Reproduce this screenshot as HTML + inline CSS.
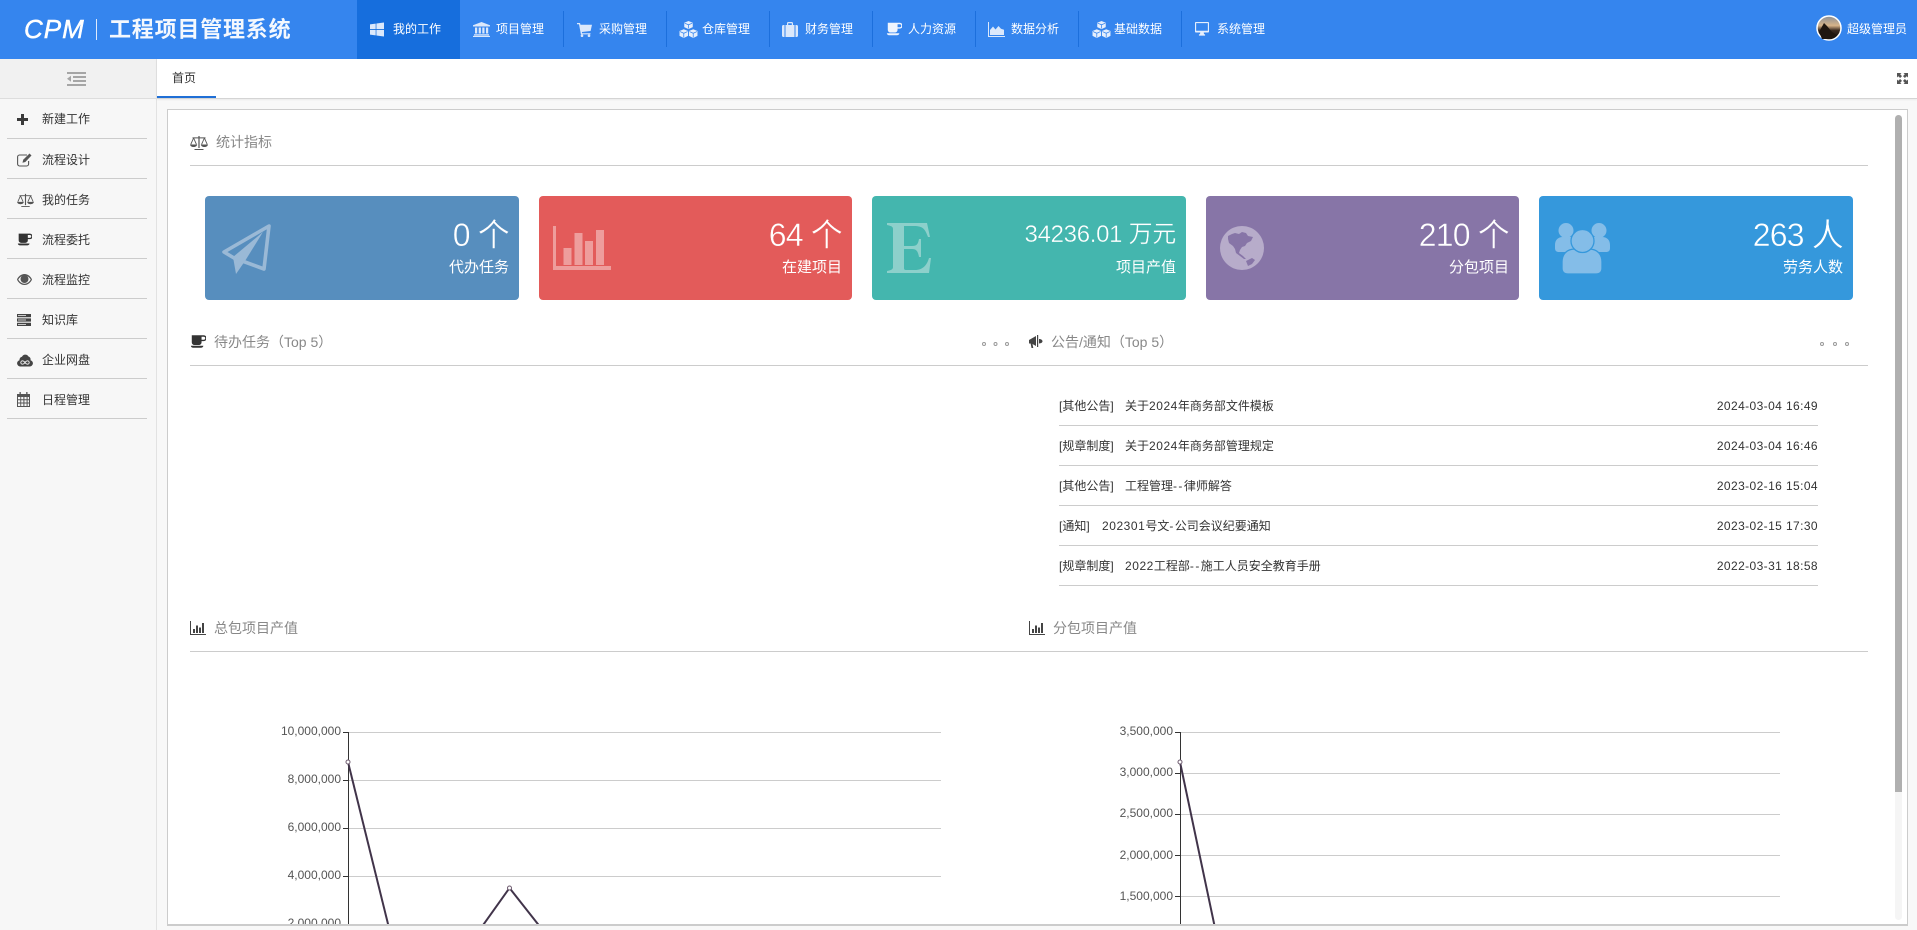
<!DOCTYPE html>
<html lang="zh-CN"><head><meta charset="utf-8"><title>CPM 工程项目管理系统</title>
<style>
html,body{margin:0;padding:0;width:1917px;height:930px;overflow:hidden;background:#f8f8f8;font-family:"Liberation Sans","Noto Sans CJK SC",sans-serif;font-size:12px;color:#333}
.a{position:absolute;white-space:nowrap}
svg.a{display:block;overflow:hidden}
#head{position:absolute;left:0;top:0;width:1917px;height:59px;background:#3585ee}
.nt{color:#fff;top:20px;line-height:19px;font-size:12px}
.sep{position:absolute;top:11px;width:1px;height:36px;background:#1c6fdc}
.ic{fill:#fff}
.st{color:#333;left:42px;line-height:18px}
.sl{position:absolute;left:7px;width:140px;height:1px;background:#ccc}
.ln{position:absolute;height:1px;background:#ccc}
.tt{color:#888;font-size:14px;line-height:20px}
.card{position:absolute;top:196px;height:104px;width:314px;border-radius:4px;color:#fff}
.num{position:absolute;right:10px;top:19px;line-height:40px;font-size:32px;white-space:nowrap;letter-spacing:-.8px;-webkit-text-stroke:.45px var(--c)}
.lab{position:absolute;right:10px;top:61px;line-height:22px;font-size:15px;white-space:nowrap}
.nc{left:1059px;line-height:18px}
.nd{left:1125px;line-height:18px}
.nr{right:99px;line-height:18px;letter-spacing:.4px}
.d{font-style:normal;letter-spacing:.55px}
.h{font-style:normal;letter-spacing:1.4px}
text{font-family:"Liberation Sans",sans-serif;font-size:12px;fill:#555}
</style></head><body>
<svg width="0" height="0" style="position:absolute">
<defs>
<symbol id="coffee" viewBox="0 0 18 14"><path fill-rule="evenodd" d="M2 0H15.500A3 3 0 0 1 15.500 6.600H13V8A3 3 0 0 1 10 11H5A3 3 0 0 1 2 8ZM13 1.600V5h2.400a1.700 1.700 0 0 0 0-3.400Z"/><path d="M1 11.800H15C15 13 14 14 12.600 14H3.200C2 14 1 13 1 11.800Z"/></symbol>
<symbol id="scale" viewBox="0 0 18 15"><path d="M8.400 1h1.200v12H8.400zM2.500 2.400h13v1h-13zM4.500 14h9v1h-9z"/><path fill="none" stroke-width=".9" stroke="currentColor" d="M3.600 3 .8 9.300M3.600 3l2.800 6.300M14.400 3l-2.800 6.300M14.400 3l2.800 6.300"/><path d="M0 9.500h7.200C7 11 5.500 12 3.600 12S.2 11 0 9.500zM10.800 9.500H18c-.2 1.500-1.700 2.500-3.600 2.500s-3.400-1-3.600-2.500z"/></symbol>
<symbol id="bars" viewBox="0 0 16 14"><path d="M0 0h1v13h15v1H0zM3 8h2v4H3zM6 4.500h2V12H6zM9 6.500h2V12H9zM12 2h2v10h-2z"/></symbol>
<symbol id="cubes" viewBox="0 0 20 18"><path d="M10 0l4.500 1.800v4.700L10 8.600 5.500 6.500V1.800zM5 8.700l4.500 1.900v5.200L5 18 .5 15.800v-5.200zM15 8.700l4.500 1.900v5.200L15 18l-4.500-2.200v-5.200z"/><path fill="none" stroke="#3585ee" stroke-width=".8" d="M6 2.300 10 4l4-1.700M10 4v4M1 11.200 5 13l4-1.800M5 13v4.500M11 11.200 15 13l4-1.800M15 13v4.500"/></symbol>
</defs></svg>

<div id="head"></div>
<div class="a" style="left:24px;top:13px;color:#fff;font:italic normal 26px/32px 'Liberation Sans',sans-serif;letter-spacing:1px;-webkit-text-stroke:.5px #fff">CPM</div>
<div style="position:absolute;left:96px;top:19px;width:1px;height:21px;background:#dfeafc"></div>
<div class="a" style="left:109px;top:15px;color:#f4f8fe;font-size:22px;line-height:29px;font-weight:bold;letter-spacing:.8px">工程项目管理系统</div>

<div style="position:absolute;left:357px;top:0;width:103px;height:59px;background:#166edd"></div>
<div class="sep" style="left:563px"></div><div class="sep" style="left:666px"></div><div class="sep" style="left:769px"></div><div class="sep" style="left:872px"></div><div class="sep" style="left:975px"></div><div class="sep" style="left:1078px"></div><div class="sep" style="left:1181px"></div>

<svg class="a ic" style="left:370px;top:22px" width="14" height="15" viewBox="0 0 16 16"><path fill="#dbe8fb" d="M0 2.200 6.500 1.300V7.500H0zM7.300 1.200 16 0V7.500H7.300zM0 8.500H6.500V14.700L0 13.800zM7.300 8.500H16V16L7.300 14.800z"/></svg>
<svg class="a ic" style="left:473px;top:22px" width="17" height="15" viewBox="0 0 17 15"><path fill="#dbe8fb" d="M8.500 0 17 3.300V4.500H0V3.300zM2 5.500h2.200v6H2zM5.700 5.500h2.200v6H5.700zM9.300 5.500h2.200v6H9.300zM13 5.500h2.200v6H13zM1 12.300h15v1.200H1zM0 13.900h17V15H0z"/></svg>
<svg class="a ic" style="left:577px;top:23px" width="15" height="14" viewBox="0 0 15 14"><path fill="#dbe8fb" d="M0 0h3l.5 1.700H15L13.600 8 4.900 9l.2 1.200H13.500v1.200H3.900L2 1.300H0z"/><circle fill="#dbe8fb" cx="5" cy="12.700" r="1.300"/><circle fill="#dbe8fb" cx="12" cy="12.700" r="1.300"/></svg>
<svg class="a" style="left:679px;top:21px;fill:#e6effc" width="19" height="17"><use href="#cubes"/></svg>
<svg class="a ic" style="left:782px;top:22px" width="16" height="15" viewBox="0 0 16 15"><path fill="#dbe8fb" fill-rule="evenodd" d="M5 3V1.200C5 .5 5.500 0 6.200 0h3.600C10.500 0 11 .5 11 1.200V3h1.500v12h-9V3zM6.200 1.200V3h3.600V1.200zM0 4.500C0 3.600.6 3 1.500 3h1v12h-1C.6 15 0 14.400 0 13.500zM13.500 3h1c.9 0 1.500.6 1.500 1.500v9c0 .9-.6 1.500-1.500 1.500h-1z"/></svg>
<svg class="a" style="left:886px;top:22px;fill:#eef4fd" width="16" height="14"><use href="#coffee"/></svg>
<svg class="a" style="left:988px;top:22px" width="17" height="15" viewBox="0 0 17 15"><path fill="#dbe8fb" d="M0 0h1v14h16v1H0zM2 13V8l3-3.500 2.500 3L10.500 4 13 6.800l3 1V13z"/></svg>
<svg class="a" style="left:1092px;top:21px;fill:#e6effc" width="19" height="17"><use href="#cubes"/></svg>
<svg class="a" style="left:1195px;top:22px" width="14" height="14" viewBox="0 0 16 16"><path fill="#e6effc" fill-rule="evenodd" d="M1 0h14c.6 0 1 .4 1 1v10c0 .6-.4 1-1 1H10l.3 2h1.200v1.500h-7V14h1.200l.3-2H1c-.6 0-1-.4-1-1V1c0-.6.4-1 1-1zM1.300 1.300v8.700h13.400V1.300z"/></svg>

<div class="a nt" style="left:393px">我的工作</div>
<div class="a nt" style="left:496px">项目管理</div>
<div class="a nt" style="left:599px">采购管理</div>
<div class="a nt" style="left:702px">仓库管理</div>
<div class="a nt" style="left:805px">财务管理</div>
<div class="a nt" style="left:908px">人力资源</div>
<div class="a nt" style="left:1011px">数据分析</div>
<div class="a nt" style="left:1114px">基础数据</div>
<div class="a nt" style="left:1217px">系统管理</div>

<svg class="a" style="left:1816px;top:15px" width="26" height="26" viewBox="0 0 26 26"><defs><linearGradient id="sky" x1="0" y1="0" x2="0" y2="1"><stop offset="0" stop-color="#8a8f96"/><stop offset=".4" stop-color="#d7b48a"/><stop offset=".6" stop-color="#3a2a20"/><stop offset="1" stop-color="#0c0a08"/></linearGradient></defs><circle cx="13" cy="13" r="12" fill="url(#sky)" stroke="#fff" stroke-width="1.500"/><path d="M3 17 8 8l3 3 5 6 5 3-6 4H6z" fill="#20160f"/></svg>
<div class="a nt" style="left:1847px">超级管理员</div>

<!-- sidebar -->
<div style="position:absolute;left:0;top:59px;width:156px;height:871px;background:#f7f7f7;border-right:1px solid #e2e2e2"></div>
<div style="position:absolute;left:0;top:59px;width:156px;height:39px;background:#f1f1f1;border-bottom:1px solid #ddd"></div>
<svg class="a" style="left:67px;top:72px" width="19" height="14" viewBox="0 0 19 14"><path fill="#a6a6a6" d="M0 0h19v2H0zM6 4h13v2H6zM6 8h13v2H6zM0 12h19v2H0zM4 3.800V9.700L0 6.800z"/></svg>

<svg class="a" style="left:17px;top:114px" width="11" height="11" viewBox="0 0 11 11"><path fill="#3a3a3a" d="M4 0h3v4h4v3H7v4H4V7H0V4h4z"/></svg>
<svg class="a" style="left:17px;top:153px" width="15" height="14" viewBox="0 0 15 14"><path fill="none" stroke="#555" stroke-width="1.100" d="M10 2H2.500A2 2 0 0 0 .6 4v7a2 2 0 0 0 2 2h7a2 2 0 0 0 2-2V8"/><path fill="#555" d="M12.500 .5l2 2L8.300 9 5.500 9.700 6.200 6.800z"/></svg>
<svg class="a" style="left:17px;top:193px;color:#555;fill:#555" width="17" height="14"><use href="#scale"/></svg>
<svg class="a" style="left:17px;top:233px;fill:#333" width="15" height="13"><use href="#coffee"/></svg>
<svg class="a" style="left:17px;top:274px" width="15" height="11" viewBox="0 0 15 11"><path fill="#555" fill-rule="evenodd" d="M7.500 0C11 0 13.800 2.500 15 5.500 13.800 8.500 11 11 7.500 11S1.200 8.500 0 5.500C1.200 2.500 4 0 7.500 0zM1.300 5.500c1 2 3.400 4.200 6.200 4.200s5.200-2.200 6.200-4.200c-.8-1.500-2-2.700-3.400-3.300a4 4 0 1 1-5.600 0C3.300 2.800 2.100 4 1.300 5.500z"/></svg>
<svg class="a" style="left:17px;top:314px" width="14" height="12" viewBox="0 0 14 12"><path fill="#444" d="M0 0h14v3.200H0zM0 4.400h14v3.200H0zM0 8.800h14V12H0z"/><path fill="#f7f7f7" d="M1 1.200h8v.8H1zM1 5.600h8v.8H1zM1 10h8v.8H1z"/></svg>
<svg class="a" style="left:17px;top:353px" width="16" height="14" viewBox="0 0 16 14"><path fill="#444" d="M3.200 13.500A3.200 3.200 0 0 1 2.500 7.200 3 3 0 0 1 5 3.800 3.600 3.600 0 0 1 11.500 3.500 3.300 3.300 0 0 1 13.500 7.200 3.200 3.200 0 0 1 12.800 13.500z"/><path fill="none" stroke="#f7f7f7" stroke-width=".9" d="M8 9.500C7 8.200 6.500 7.800 5.500 7.800a1.700 1.700 0 0 0 0 3.400C6.500 11.200 7 10.800 8 9.500c1-1.300 1.500-1.700 2.500-1.700a1.700 1.700 0 0 1 0 3.400C9.500 11.200 9 10.800 8 9.500z"/></svg>
<svg class="a" style="left:17px;top:392px" width="13" height="15" viewBox="0 0 13 15"><path fill="#555" fill-rule="evenodd" d="M2.500 0h1.300v2h5.400V0h1.300v2H13v13H0V2h2.500zM1 5v2.200h2.300V5zm3.200 0v2.200h2.200V5zm3.200 0v2.200h2.200V5zm3.200 0v2.200H12V5zM1 8.200v2.300h2.300V8.200zm3.200 0v2.300h2.200V8.200zm3.200 0v2.300h2.200V8.200zm3.200 0v2.300H12V8.200zM1 11.500V14h2.300v-2.500zm3.200 0V14h2.200v-2.500zm3.200 0V14h2.200v-2.500zm3.200 0V14H12v-2.500z"/></svg>

<div class="a st" style="top:110px">新建工作</div><div class="sl" style="top:138px"></div>
<div class="a st" style="top:151px">流程设计</div><div class="sl" style="top:178px"></div>
<div class="a st" style="top:191px">我的任务</div><div class="sl" style="top:218px"></div>
<div class="a st" style="top:231px">流程委托</div><div class="sl" style="top:258px"></div>
<div class="a st" style="top:271px">流程监控</div><div class="sl" style="top:298px"></div>
<div class="a st" style="top:311px">知识库</div><div class="sl" style="top:338px"></div>
<div class="a st" style="top:351px">企业网盘</div><div class="sl" style="top:378px"></div>
<div class="a st" style="top:391px">日程管理</div><div class="sl" style="top:418px"></div>

<!-- tabs -->
<div style="position:absolute;left:157px;top:59px;width:1760px;height:39px;background:#fff;border-bottom:1px solid #d4d4d4;box-shadow:0 1px 2px rgba(0,0,0,.06)"></div>
<div class="a" style="left:172px;top:69px;line-height:18px;color:#333">首页</div>
<div style="position:absolute;left:157px;top:96px;width:59px;height:2px;background:#1f6fd6"></div>
<svg class="a" style="left:1897px;top:73px" width="11" height="11" viewBox="0 0 11 11"><path fill="#555" d="M0 0h4.500L3.200 1.300 5 3.100 3.100 5 1.300 3.200 0 4.500zM11 0v4.500L9.700 3.200 7.900 5 6 3.100 7.800 1.300 6.500 0zM0 11V6.500l1.300 1.300L3.100 6 5 7.900 3.200 9.700 4.500 11zM11 11H6.500l1.300-1.300L6 7.900 7.900 6l1.800 1.800L11 6.500z"/></svg>

<!-- frame -->
<div style="position:absolute;left:167px;top:109px;width:1739px;height:815px;background:#fff;border:1px solid #ccc"></div>

<svg class="a" style="left:190px;top:135px;color:#555;fill:#555" width="18" height="15"><use href="#scale"/></svg>
<div class="a tt" style="left:216px;top:132px">统计指标</div>
<div class="ln" style="left:190px;top:165px;width:1678px"></div>

<div class="card" style="left:205px;background:#578ebe;--c:#578ebe"><div class="num">0 个</div><div class="lab">代办任务</div></div>
<div class="card" style="left:539px;width:313px;background:#e35b5a;--c:#e35b5a"><div class="num">64 个</div><div class="lab">在建项目</div></div>
<div class="card" style="left:872px;background:#44b6ae;--c:#44b6ae"><div class="num" style="font-size:24px;letter-spacing:-.3px;-webkit-text-stroke:.35px #44b6ae">34236.01 万元</div><div class="lab">项目产值</div></div>
<div class="card" style="left:1206px;width:313px;background:#8775a7;--c:#8775a7"><div class="num">210 个</div><div class="lab">分包项目</div></div>
<div class="card" style="left:1539px;background:#3598dc;--c:#3598dc"><div class="num">263 人</div><div class="lab">劳务人数</div></div>

<svg class="a" style="left:220px;top:223px" width="51" height="51" viewBox="0 0 51 51"><path fill="none" stroke="#9ab9d6" stroke-width="3.600" stroke-linejoin="round" d="M49 3 4 29l10 6 30 11z"/><path fill="#9ab9d6" d="M13 34 43 9 25 38l-9 13z"/></svg>
<svg class="a" style="left:553px;top:226px" width="58" height="44" viewBox="0 0 58 44"><path fill="#ee9d9c" d="M0 0h3v40h55v4H0zM10.500 22h8v17h-8zM21.500 7h8v32h-8zM32 15h8v24h-8zM43 4h8v35h-8z"/></svg>
<svg class="a" style="left:887px;top:223px" width="44" height="50" viewBox="0 0 44 50"><path fill="#8dd0cb" d="M0 0H40L43 14H41C38 6 36 3 27 3H17V23H25C30 23 31 21 32 16H34V34H32C31 29 30 26 25 26H17V45C17 47 18 47 20 47H28C36 47 40 42 42 35H44L42 50H0V48C5 47 6 46 6 44V6C6 4 5 3 0 2Z"/></svg>
<svg class="a" style="left:1220px;top:226px" width="44" height="44" viewBox="0 0 44 44"><circle cx="22" cy="22" r="22" fill="#b7acca"/><path fill="#8775a7" d="M8 10 12 8 15 7 19 8 22 6 26 7 28 10 33 11 31 15 27 17 25 20 22 21 20 24 19 27 23 30 26 33 24 33 20 30 16 27 15 23 13 20 9 17 8 13ZM26 35 32 32 35 34 32 38 28 40Z"/></svg>
<svg class="a" style="left:1555px;top:223px" width="55" height="51" viewBox="0 0 55 51"><g fill="#84bde8"><circle cx="11" cy="7.500" r="7.500"/><circle cx="44" cy="7.500" r="7.500"/><path d="M0 22C0 17 3 14 8 14H17C22 14 24 18 24 23V29H4C1.500 29 0 28 0 25zM55 22C55 17 52 14 47 14H38C33 14 31 18 31 23V29H51C53.500 29 55 28 55 25z"/></g><g fill="#84bde8" stroke="#3598dc" stroke-width="1.300"><path d="M7 39C7 31 12 26 20 26H34C42 26 47 31 47 39V45C47 49 45 51 41 51H13C9 51 7 49 7 45z"/><ellipse cx="27.500" cy="18" rx="11.500" ry="11.500"/></g></svg>

<svg class="a" style="left:190px;top:335px;fill:#333" width="16" height="13"><use href="#coffee"/></svg>
<div class="a tt" style="left:214px;top:332px">待办任务（Top 5）</div>
<svg class="a" style="left:1029px;top:335px" width="14" height="14" viewBox="0 0 14 14"><path fill="#444" d="M0 5l7-4v10L3.500 9l.8 4H2.500L1.600 8.500H0zM8 0h1.200v12H8zM10 4c2 0 3.500 1 3.500 2.300S12 8.500 10 8.500z"/></svg>
<div class="a tt" style="left:1051px;top:332px">公告/通知（Top 5）</div>
<div class="ln" style="left:190px;top:365px;width:1678px"></div>

<div class="a nc" style="top:397px">[其他公告]</div><div class="a nd" style="top:397px">关于<i class="d">2024</i>年商务部文件模板</div><div class="a nr" style="top:397px">2024-03-04 16:49</div><div class="ln" style="left:1059px;top:425px;width:759px"></div>
<div class="a nc" style="top:437px">[规章制度]</div><div class="a nd" style="top:437px">关于<i class="d">2024</i>年商务部管理规定</div><div class="a nr" style="top:437px">2024-03-04 16:46</div><div class="ln" style="left:1059px;top:465px;width:759px"></div>
<div class="a nc" style="top:477px">[其他公告]</div><div class="a nd" style="top:477px">工程管理<i class="h">--</i>律师解答</div><div class="a nr" style="top:477px">2023-02-16 15:04</div><div class="ln" style="left:1059px;top:505px;width:759px"></div>
<div class="a nc" style="top:517px">[通知]</div><div class="a nd" style="top:517px;left:1102px"><i class="d">202301</i>号文<i class="h">-</i>公司会议纪要通知</div><div class="a nr" style="top:517px">2023-02-15 17:30</div><div class="ln" style="left:1059px;top:545px;width:759px"></div>
<div class="a nc" style="top:557px">[规章制度]</div><div class="a nd" style="top:557px"><i class="d">2022</i>工程部<i class="h">--</i>施工人员安全教育手册</div><div class="a nr" style="top:557px">2022-03-31 18:58</div><div class="ln" style="left:1059px;top:585px;width:759px"></div>

<svg class="a" style="left:190px;top:621px;fill:#444" width="16" height="14"><use href="#bars"/></svg>
<div class="a tt" style="left:214px;top:618px">总包项目产值</div>
<svg class="a" style="left:1029px;top:621px;fill:#444" width="16" height="14"><use href="#bars"/></svg>
<div class="a tt" style="left:1053px;top:618px">分包项目产值</div>
<div class="ln" style="left:190px;top:651px;width:1678px"></div>

<svg class="a" style="left:0;top:0" width="1917" height="925" viewBox="0 0 1917 925">
<g fill="none" stroke="#999" stroke-width="1"><circle cx="984" cy="344" r="1.500"/><circle cx="995.500" cy="344" r="1.500"/><circle cx="1007" cy="344" r="1.500"/><circle cx="1822" cy="344" r="1.500"/><circle cx="1835" cy="344" r="1.500"/><circle cx="1847" cy="344" r="1.500"/></g>
<g stroke="#ccc" stroke-width="1" shape-rendering="crispEdges"><path d="M348 732.500H941M348 780.500H941M348 828.500H941M348 876.500H941M348 924.500H941"/><path d="M1180 732.500H1780M1180 773.500H1780M1180 814.500H1780M1180 855.500H1780M1180 896.500H1780"/></g>
<g stroke="#333" stroke-width="1" shape-rendering="crispEdges" fill="none"><path d="M348.500 732V925M343 732.500H348M343 780.500H348M343 828.500H348M343 876.500H348M343 924.500H348"/><path d="M1180.500 732V925M1175 732.500H1180M1175 773.500H1180M1175 814.500H1180M1175 855.500H1180M1175 896.500H1180"/></g>
<g text-anchor="end"><text x="341" y="735">10,000,000</text><text x="341" y="783">8,000,000</text><text x="341" y="831">6,000,000</text><text x="341" y="879">4,000,000</text><text x="341" y="927">2,000,000</text>
<text x="1173" y="735">3,500,000</text><text x="1173" y="776">3,000,000</text><text x="1173" y="817">2,500,000</text><text x="1173" y="859">2,000,000</text><text x="1173" y="900">1,500,000</text></g>
<g fill="none" stroke="#41344a" stroke-width="2"><path d="M348 762 389 928"/><path d="M481 928 509.500 888 541 928"/><path d="M1180 762 1215 928"/></g>
<g fill="#fff" stroke="#6d5a6e" stroke-width="1"><circle cx="348" cy="762" r="2"/><circle cx="509.500" cy="888" r="2"/><circle cx="1180" cy="762" r="2"/></g>
</svg>
<div style="position:absolute;left:167px;top:924px;width:1741px;height:1px;background:#ccc"></div>

<div style="position:absolute;left:1895px;top:115px;width:7px;height:805px;background:#f5f5f5;border-radius:4px"></div>
<div style="position:absolute;left:1895px;top:115px;width:7px;height:677px;background:#b0b0b0;border-radius:4px 4px 0 0"></div>
</body></html>
